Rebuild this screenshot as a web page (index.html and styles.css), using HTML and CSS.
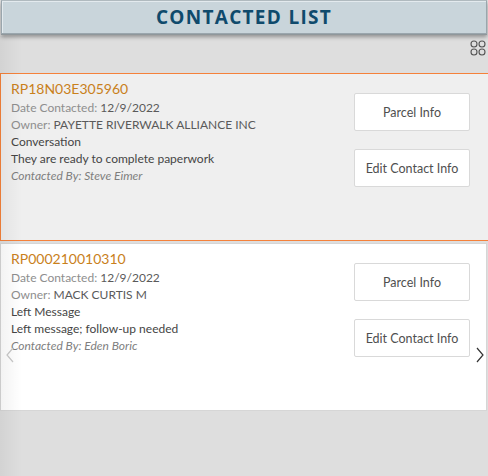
FILE: index.html
```html
<!DOCTYPE html>
<html>
<head>
<meta charset="utf-8">
<link rel="stylesheet" href="styles.css">
</head>
<body>
<div class="header"><h1 class="title">CONTACTED LIST</h1></div>
<div class="toolbar">
  <svg class="grid-icon" width="16" height="16" viewBox="0 0 16 16">
    <circle cx="4" cy="4" r="3" fill="none" stroke="#555" stroke-width="1.1"/>
    <circle cx="12" cy="4" r="3" fill="none" stroke="#555" stroke-width="1.1"/>
    <circle cx="4" cy="12" r="3" fill="none" stroke="#555" stroke-width="1.1"/>
    <circle cx="12" cy="12" r="3" fill="none" stroke="#555" stroke-width="1.1"/>
  </svg>
</div>
<div class="list">
  <div class="card selected">
    <div class="info">
      <div class="pid">RP18N03E305960</div>
      <div class="line"><span class="lbl">Date Contacted:</span> 12/9/2022</div>
      <div class="line"><span class="lbl">Owner:</span> PAYETTE RIVERWALK ALLIANCE INC</div>
      <div class="line dark">Conversation</div>
      <div class="line dark">They are ready to complete paperwork</div>
      <div class="line by">Contacted By: Steve Eimer</div>
    </div>
    <div class="actions">
      <button class="btn">Parcel Info</button>
      <button class="btn">Edit Contact Info</button>
    </div>
  </div>
  <div class="card plain">
    <div class="info">
      <div class="pid">RP000210010310</div>
      <div class="line"><span class="lbl">Date Contacted:</span> 12/9/2022</div>
      <div class="line"><span class="lbl">Owner:</span> MACK CURTIS M</div>
      <div class="line dark">Left Message</div>
      <div class="line dark">Left message; follow-up needed</div>
      <div class="line by">Contacted By: Eden Boric</div>
    </div>
    <div class="actions">
      <button class="btn">Parcel Info</button>
      <button class="btn">Edit Contact Info</button>
    </div>
    <svg class="chev prev" width="10" height="16" viewBox="0 0 10 16"><path d="M8 1 L2 8 L8 15" fill="none" stroke="#c8c8c8" stroke-width="1.2"/></svg>
    <svg class="chev next" width="10" height="16" viewBox="0 0 10 16"><path d="M2 1 L8 8 L2 15" fill="none" stroke="#333" stroke-width="1.2"/></svg>
  </div>
</div>
<div class="edge"></div>
</body>
</html>
```
FILE: styles.css
```css
html, body {
  margin: 0;
  padding: 0;
}
body {
  width: 488px;
  height: 476px;
  background: #dedede;
  font-family: Lato, "Open Sans", sans-serif;
  overflow: hidden;
  position: relative;
}
.header {
  height: 32px;
  background: #c9d5db;
  border: 1px solid #9aa6ad;
  border-top-color: #b0babf;
  box-shadow: 0 1px 0 #8f979b, 0 3px 4px rgba(0,0,0,0.35), inset 1px 1px 0 #e3eaee;
  display: flex;
  align-items: center;
  justify-content: center;
  margin: 0 1px;
}
.title {
  margin: 0;
  font-family: "Open Sans", sans-serif;
  font-weight: 700;
  font-size: 19px;
  letter-spacing: 1.3px;
  color: #0f4a6c;
  line-height: 1;
}
.toolbar {
  height: 39px;
  display: flex;
  justify-content: flex-end;
  align-items: flex-start;
  padding-right: 2px;
  box-sizing: border-box;
  padding-top: 6px;
}
.list {
  display: flex;
  flex-direction: column;
  gap: 2px;
}
.card {
  display: flex;
  justify-content: space-between;
  box-sizing: border-box;
  position: relative;
}
.card.selected {
  height: 168px;
  width: 489px;
  background: #efefef;
  border: 1px solid #f5813a;
}
.card.plain {
  height: 168px;
  width: 487px;
  background: #fff;
  border: 1px solid #d6d6d6;
}
.info {
  padding: 6px 0 0 10px;
}
.pid {
  color: #c9801b;
  font-size: 14px;
  line-height: 18px;
  margin-bottom: 1px;
}
.line {
  font-size: 12px;
  line-height: 17px;
  color: #5a5a5a;
  white-space: nowrap;
}
.lbl {
  color: #8e8e8e;
}
.line.dark {
  color: #454545;
}
.line.by {
  color: #7e7e7e;
  font-style: italic;
}
.actions {
  display: flex;
  flex-direction: column;
  gap: 18px;
  padding: 19px 18px 0 0;
}
.card.plain .actions {
  padding-right: 16px;
}
.btn {
  width: 116px;
  height: 38px;
  background: #fff;
  border: 1px solid #d9d9d9;
  border-radius: 2px;
  font-family: Lato, "Open Sans", sans-serif;
  font-size: 12.5px;
  color: #4f4f4f;
  padding: 0;
}
.chev {
  position: absolute;
  top: 103px;
}
.chev.prev { left: 4px; }
.chev.next { right: 1px; }
.edge {
  position: absolute;
  left: 0;
  top: 36px;
  bottom: 0;
  width: 22px;
  background: linear-gradient(to right, rgba(0,0,0,0.05), rgba(0,0,0,0));
  pointer-events: none;
}
```
